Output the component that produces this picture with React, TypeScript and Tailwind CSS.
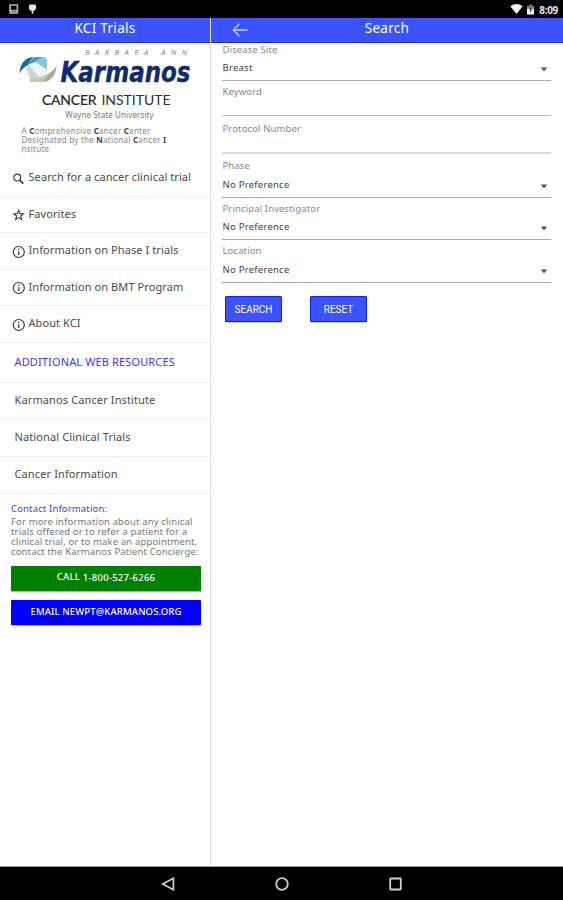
import React from 'react';

interface MenuItem {
    label: string;
    icon: 'search' | 'star' | 'info';
}

const menuItems: MenuItem[] = [
    { label: 'Search for a cancer clinical trial', icon: 'search' },
    { label: 'Favorites', icon: 'star' },
    { label: 'Information on Phase I trials', icon: 'info' },
    { label: 'Information on BMT Program', icon: 'info' },
    { label: 'About KCI', icon: 'info' },
];

const resources = ['Karmanos Cancer Institute', 'National Clinical Trials', 'Cancer Information'];

interface Field {
    label: string;
    value?: string;
    height: string;
    border: string;
}

const fields: Field[] = [
    { label: 'Disease Site', value: 'Breast', height: 'h-[38px] pt-[1px]', border: 'border-[#b0b0b0]' },
    { label: 'Keyword', height: 'h-[35px] pt-[5px]', border: 'border-[#b8b8b8]' },
    { label: 'Protocol Number', height: 'h-[38px] pt-[7px]', border: 'border-b-2 border-[#dcdcdc]' },
    { label: 'Phase', value: 'No Preference', height: 'h-[44px] pt-[6px]', border: 'border-[#a8a8a8]' },
    { label: 'Principal Investigator', value: 'No Preference', height: 'h-[42px] pt-[5px]', border: 'border-[#a8a8a8]' },
    { label: 'Location', value: 'No Preference', height: 'h-[43px] pt-[5px]', border: 'border-[#a8a8a8]' },
];

const MenuIcon: React.FC<{ name: MenuItem['icon'] }> = ({ name }) => (
    <svg viewBox="0 0 14 14" className="w-3.5 h-3.5 mt-[2px] shrink-0" fill="none" stroke="#3a3a3a" strokeWidth="1.2">
        {name === 'search' && (
            <>
                <circle cx="5.2" cy="5.6" r="3.4" />
                <path d="M7.8 8.2L11.3 11.7" strokeWidth="1.7" />
            </>
        )}
        {name === 'star' && (
            <path d="M6.7 2.3L8 5.6L11.5 5.8L8.8 8L9.7 11.6L6.7 9.6L3.7 11.6L4.6 8L1.9 5.8L5.4 5.6Z" strokeWidth="1.1" />
        )}
        {name === 'info' && (
            <>
                <circle cx="6.8" cy="7" r="5.5" />
                <path d="M6.8 6.2V10M6.8 3.8V5.1" strokeWidth="1.3" />
            </>
        )}
    </svg>
);

const Logo: React.FC = () => (
    <svg viewBox="0 0 210 66" className="w-[210px] h-[66px] block">
        <path d="M19.5 30.5C20 20 26 14 34 14H43Q47 14 47 18V27L35 19L28 22Q22 25 19.5 30.5Z" fill="#8ac4dc" />
        <path d="M19.5 30.5C20 20 26 14 33 14.5C30 17 29 19 28 22Q22 25 19.5 30.5Z" fill="#176f99" />
        <path d="M28 22C29 18 32 15 37 14H43C39 15 37 17 35 19Z" fill="#3b9fc5" />
        <path d="M28 22L35 19L47 27V30L41 34L29 27Z" fill="#eef3f4" />
        <path d="M26 24L29 22L39 34L31 37Q28 32 26 24Z" fill="#ccd6d8" />
        <path d="M56.5 22.5C56 33 50 39 42 39H33Q29 39 29 36L40 34L48 31Q54 28 56.5 22.5Z" fill="#c6c5b8" />
        <path d="M56.5 22.5C56 33 50 39 43 38.5C46 36 47 34 48 31Q54 28 56.5 22.5Z" fill="#aaa99a" />
        <text x="85" y="12" textLength="102" fontSize="7.5" fontStyle="italic" fill="#858585" fontFamily="Noto Sans, sans-serif">BARBARA ANN</text>
        <text x="60.5" y="38.5" textLength="130" lengthAdjust="spacingAndGlyphs" fontSize="27.5" fontStyle="italic" fontWeight="700" fill="#10296f" stroke="#10296f" strokeWidth="0.4" fontFamily="DejaVu Sans, sans-serif">Karmanos</text>
        <text x="42" y="62" textLength="54.5" fontSize="14" fill="#252525" stroke="#252525" strokeWidth="0.2" fontFamily="Lato, sans-serif">CANCER</text>
        <text x="101.5" y="62" textLength="69" fontSize="14" fill="#303030" fontFamily="Lato, sans-serif">INSTITUTE</text>
    </svg>
);

const SelectArrow: React.FC = () => (
    <svg viewBox="0 0 8 5" className="w-2 h-[5px] mr-[3px] mt-[2px]">
        <path d="M0.8 0.5H7.2L4 4.5Z" fill="#555" />
    </svg>
);

const StatusBar: React.FC = () => (
    <div className="h-[18px] bg-black flex items-center justify-between pl-[9px] pr-[5px]">
        <div className="flex items-center gap-[10px]">
            <svg viewBox="0 0 10 10" className="w-[10px] h-[10px]">
                <path d="M0.3 0.3H9.2V9.7H0.3ZM2 1.8V5.8H7.6V1.8Z" fill="#b5b5b5" fillRule="evenodd" />
                <path d="M2 8.3L3.8 6L5.3 7.3L6.6 5.8L7.8 8.3Z" fill="#777" />
            </svg>
            <svg viewBox="0 0 7 10" className="w-[7px] h-[10px]">
                <path d="M0.5 0.5H6.5L7 2V4.8L5.5 6.8H4.3V9.7H2.7V6.8H1.5L0 4.8V2Z" fill="#e2e2e2" />
            </svg>
        </div>
        <div className="flex items-center">
            <svg viewBox="0 0 13 10" className="w-[13px] h-[10px] mr-[4px]">
                <path d="M0.3 2.3Q6.5 -2.3 12.7 2.3L6.5 10Z" fill="#f5f5f5" />
            </svg>
            <svg viewBox="0 0 7 11" className="w-[7px] h-[11px] mr-[5px]">
                <path d="M2.3 0.5H4.7V1.7H7V5H0V1.7H2.3Z" fill="#7d7d7d" />
                <path d="M0 5H7V10.5H0Z" fill="#f5f5f5" />
                <path d="M4.3 3L2.2 6.3H3.6L3 8.7L5.2 5.4H3.8Z" fill="#222" />
            </svg>
            <span className="text-[10px] leading-[18px] font-bold text-[#e6e6e6] tracking-[-0.3px] mt-[1px]">8:09</span>
        </div>
    </div>
);

const Sidebar: React.FC = () => (
    <aside className="w-[211px] shrink-0 border-r border-[#dedede] flex flex-col">
        <header className="h-[25px] bg-[#3a53ff] border-b border-[#1826d9] text-white text-center text-[13.5px] leading-[21px] tracking-[0.3px]">
            KCI Trials
        </header>
        <Logo />
        <div className="text-center pl-[9px] mt-[1px] text-[8px] leading-[10px] text-[#777] tracking-[0.1px]">
            Wayne State University
        </div>
        <div className="mt-[6px] ml-[21.5px] text-[8px] leading-[9px] text-[#888] tracking-[0.25px] whitespace-nowrap">
            <div>A <b className="text-[#444]">C</b>omprehensive <b className="text-[#444]">C</b>ancer <b className="text-[#444]">C</b>enter</div>
            <div>Designated by the <b className="text-[#444]">N</b>ational <b className="text-[#444]">C</b>ancer <b className="text-[#444]">I</b></div>
            <div>nsitute</div>
        </div>
        <nav className="mt-[7px]">
            {menuItems.map(item => (
                <div key={item.label} className="h-[36.5px] pl-[12px] flex items-center border-b border-[#f0f0f0]">
                    <MenuIcon name={item.icon} />
                    <span className="ml-[2.5px] -mt-[1px] text-[11px] leading-4 text-[#4a4a4a] tracking-[0.08px] whitespace-nowrap">{item.label}</span>
                </div>
            ))}
        </nav>
        <h2 className="h-10 pl-[14.5px] text-[11px] leading-[37px] text-[#4836ee] tracking-[0.13px] border-b border-[#f0f0f0] whitespace-nowrap">
            ADDITIONAL WEB RESOURCES
        </h2>
        {resources.map(name => (
            <div key={name} className="h-[37px] pl-[14.5px] text-[11px] leading-[33px] text-[#4a4a4a] tracking-[0.12px] border-b border-[#f0f0f0] whitespace-nowrap">
                {name}
            </div>
        ))}
        <section className="pl-[11px] pr-[9px] pt-[9px]">
            <h3 className="text-[9.5px] leading-3 text-[#4836ee] tracking-[0.15px]">Contact Information:</h3>
            <div className="mt-[2px] text-[9.5px] leading-[10px] text-[#777] tracking-[0.14px] whitespace-nowrap">
                <p>For more information about any clinical</p>
                <p>trials offered or to refer a patient for a</p>
                <p>clinical trial, or to make an appointment,</p>
                <p>contact the Karmanos Patient Concierge:</p>
            </div>
            <button className="block w-full h-[25px] mt-[9px] bg-[#008000] rounded-[1px] shadow-[0_1px_1px_rgba(0,0,0,0.35)] text-white text-[9.5px] font-medium leading-[24px] tracking-[0.25px]">
                <span className="relative -top-px">CALL</span> 1-800-527-6266
            </button>
            <button className="block w-full h-[25px] mt-[9px] bg-[#0000ff] rounded-[1px] shadow-[0_1px_1px_rgba(0,0,0,0.35)] text-white text-[9.5px] font-medium leading-[22px] tracking-[0.12px]">
                EMAIL NEWPT@KARMANOS.ORG
            </button>
        </section>
    </aside>
);

const SearchPanel: React.FC = () => (
    <main className="flex-1 flex flex-col">
        <header className="h-[25px] bg-[#3a53ff] border-b border-[#1826d9] text-white text-[13.5px] leading-[21px] tracking-[0.3px] flex">
            <svg viewBox="0 0 16 14" className="w-4 h-3.5 ml-[21px] mt-[5px]" fill="none" stroke="#c5cdff" strokeWidth="1.3">
                <path d="M7.5 0.8L1.2 7L7.5 13.2M1.2 7H15.5" />
            </svg>
            <span className="flex-1 text-center pr-[37px]">Search</span>
        </header>
        <form className="pl-[11px] pr-[12px]">
            {fields.map(field => (
                <div key={field.label} className={`${field.height} border-b ${field.border} flex flex-col justify-between`}>
                    <label className="pl-[0.5px] text-[9.5px] leading-[11px] text-[#888] tracking-[0.12px]">{field.label}</label>
                    {field.value && (
                        <div className="pl-[0.5px] flex items-center justify-between text-[9.5px] leading-3 mb-[6px] text-[#444] tracking-[0.25px]">
                            <span>{field.value}</span>
                            <SelectArrow />
                        </div>
                    )}
                </div>
            ))}
            <div className="flex gap-7 mt-[13px] pl-[3px] font-[Roboto,sans-serif]">
                <button type="button" className="w-[57px] h-[26px] rounded-[1px] border border-[#1220df] bg-[#3a53ff] text-white text-[10px] shadow-[0_1px_1px_rgba(0,0,0,0.2)]">SEARCH</button>
                <button type="button" className="w-[57px] h-[26px] rounded-[1px] border border-[#1220df] bg-[#3a53ff] text-white text-[10px] shadow-[0_1px_1px_rgba(0,0,0,0.2)]">RESET</button>
            </div>
        </form>
    </main>
);

const NavBar: React.FC = () => (
    <div className="h-[33px] bg-black flex items-center justify-center gap-[100px]">
        <svg viewBox="0 0 14 14" className="w-3.5 h-3.5" fill="none" stroke="#cfcfcf" strokeWidth="1.7">
            <path d="M12.4 1.3V12.7L1.8 7Z" />
        </svg>
        <svg viewBox="0 0 14 14" className="w-3.5 h-3.5" fill="none" stroke="#cfcfcf" strokeWidth="1.8">
            <circle cx="7" cy="7" r="5.8" />
        </svg>
        <svg viewBox="0 0 14 14" className="w-3.5 h-3.5" fill="none" stroke="#cfcfcf" strokeWidth="1.8">
            <rect x="1.2" y="1.5" width="10.6" height="11" rx="0.5" />
        </svg>
    </div>
);

const App: React.FC = () => {
    return (
        <div className="w-[563px] h-[900px] bg-white overflow-hidden flex flex-col font-['Noto_Sans',sans-serif]">
            <StatusBar />
            <div className="flex-1 flex border-b border-[#999]">
                <Sidebar />
                <SearchPanel />
            </div>
            <NavBar />
        </div>
    );
};

export default App;
